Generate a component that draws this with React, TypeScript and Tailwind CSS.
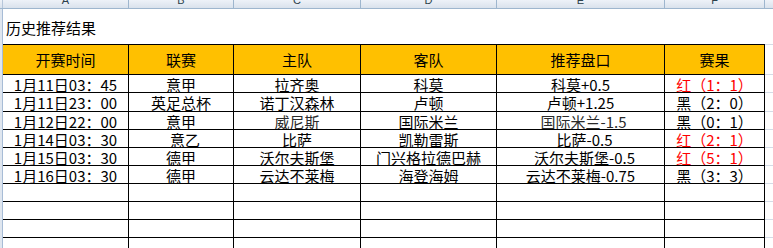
import React from "react";

// Excel-style sheet: 历史推荐结果
const COLS = [
  { w: "w-[126px]", label: "A" },
  { w: "w-[105px]", label: "B" },
  { w: "w-[127px]", label: "C" },
  { w: "w-[136px]", label: "D" },
  { w: "w-[168px]", label: "E" },
  { w: "w-[100px]", label: "F" },
];

const HEAD = ["开赛时间", "联赛", "主队", "客队", "推荐盘口", "赛果"];

type Cell = { t: string; c?: string };

const ROWS: { h: string; cells: Cell[] }[] = [
  { h: "h-[18px]", cells: [{ t: "1月11日03：45" }, { t: "意甲" }, { t: "拉齐奥" }, { t: "科莫" }, { t: "科莫+0.5" }, { t: "红（1：1）", c: "text-[#ff0000]" }] },
  { h: "h-[19px]", cells: [{ t: "1月11日23：00" }, { t: "英足总杯" }, { t: "诺丁汉森林" }, { t: "卢顿" }, { t: "卢顿+1.25" }, { t: "黑（2：0）" }] },
  { h: "h-[18px]", cells: [{ t: "1月12日22：00" }, { t: "意甲" }, { t: "威尼斯", c: "text-[#2a2a2a]" }, { t: "国际米兰" }, { t: "国际米兰-1.5", c: "text-[#2a2a2a] pl-[6px]" }, { t: "黑（0：1）" }] },
  { h: "h-[18px]", cells: [{ t: "1月14日03：30" }, { t: "意乙", c: "pl-[8px]" }, { t: "比萨" }, { t: "凯勒雷斯" }, { t: "比萨-0.5", c: "pl-[8px]" }, { t: "红（2：1）", c: "text-[#ff0000]" }] },
  { h: "h-[18px]", cells: [{ t: "1月15日03：30" }, { t: "德甲" }, { t: "沃尔夫斯堡" }, { t: "门兴格拉德巴赫" }, { t: "沃尔夫斯堡-0.5", c: "pl-[8px]" }, { t: "红（5：1）", c: "text-[#ff0000]" }] },
  { h: "h-[18px]", cells: [{ t: "1月16日03：30" }, { t: "德甲" }, { t: "云达不莱梅" }, { t: "海登海姆" }, { t: "云达不莱梅-0.75" }, { t: "黑（3：3）" }] },
];

const EMPTY = 4;

function Filler() {
  return <div className="w-[8px] shrink-0 border-b border-[#d4dbe6]" />;
}

function DataRow({ h, cells }: { h: string; cells: Cell[] }) {
  return (
    <div className={"flex " + h}>
      <div className="w-[3px] shrink-0 bg-[#dfe6ef] border-r border-[#a7bcd6]" />
      {COLS.map((col, i) => (
        <div
          key={i}
          className={
            "flex shrink-0 items-center justify-center overflow-hidden whitespace-nowrap border-r border-b border-black pt-[1px] " +
            col.w +
            " " +
            (cells[i]?.c ?? "")
          }
        >
          {cells[i]?.t ?? ""}
        </div>
      ))}
      <Filler />
    </div>
  );
}

export default function App() {
  return (
    <div
      className="w-[773px] h-[248px] overflow-hidden bg-white text-[15px] leading-none text-black"
      style={{ fontFamily: '"Noto Sans CJK SC", "Liberation Sans", sans-serif' }}
    >
      {/* column letters bar */}
      <div className="flex h-[9px] border-b border-[#9eb6ce] bg-linear-to-b from-[#eef2f8] to-[#dae2ec]">
        <div className="w-[3px] shrink-0 border-r border-[#b6c6da]" />
        {COLS.map((col) => (
          <div key={col.label} className={"flex shrink-0 justify-center overflow-hidden border-r border-[#9eb6ce] " + col.w}>
            <span className="-mt-[5px] text-[11px] leading-none text-[#2b3f4a]" style={{ fontFamily: '"Liberation Sans", sans-serif' }}>
              {col.label}
            </span>
          </div>
        ))}
      </div>

      {/* title row */}
      <div className="flex h-[36px]">
        <div className="w-[3px] shrink-0 bg-[#dfe6ef] border-r border-[#a7bcd6]" />
        <div className="flex w-[762px] shrink-0 items-center border-b border-black pl-[3px] pt-[1px]">历史推荐结果</div>
        <Filler />
      </div>

      {/* header row */}
      <div className="flex h-[30px]">
        <div className="w-[3px] shrink-0 bg-[#dfe6ef] border-r border-[#a7bcd6]" />
        {COLS.map((col, i) => (
          <div key={i} className={"flex shrink-0 items-center justify-center border-r border-b border-black bg-[#ffc000] " + col.w}>
            {HEAD[i]}
          </div>
        ))}
        <Filler />
      </div>

      {ROWS.map((r, i) => (
        <DataRow key={i} h={r.h} cells={r.cells} />
      ))}
      {Array.from({ length: EMPTY }).map((_, i) => (
        <DataRow key={"e" + i} h="h-[18px]" cells={[]} />
      ))}
    </div>
  );
}
